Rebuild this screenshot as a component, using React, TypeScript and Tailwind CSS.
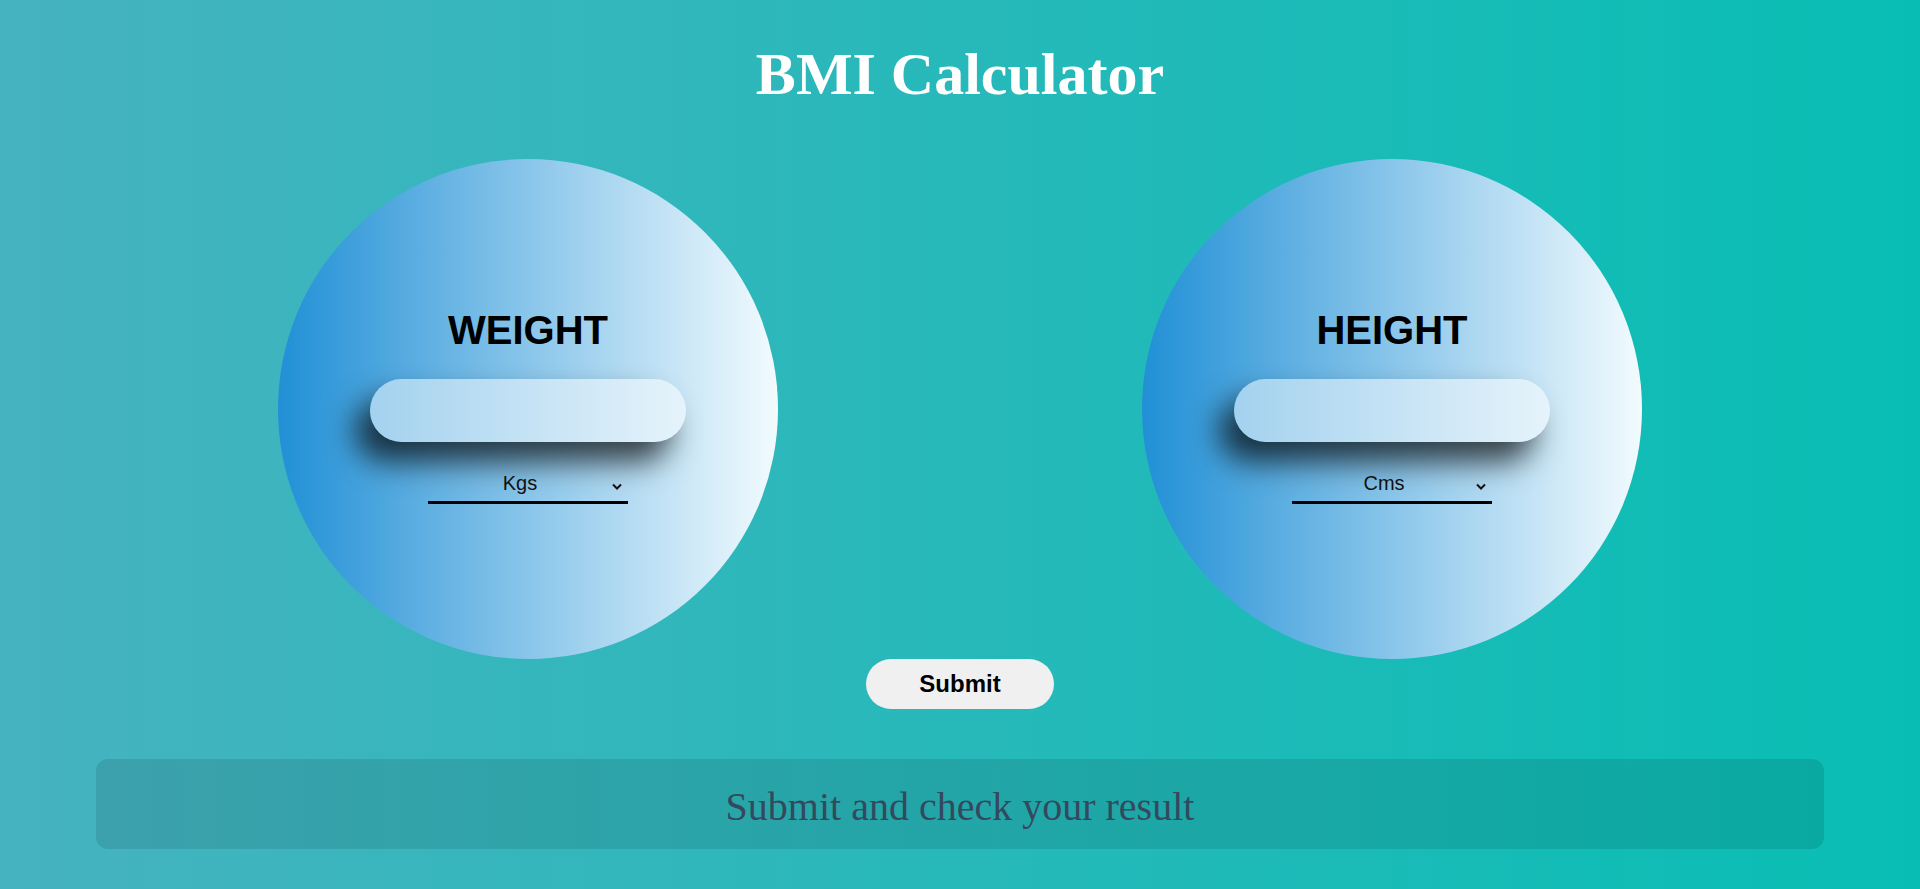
import { useState } from "react"

const Chevron = () => (
    <svg
        className="pointer-events-none absolute right-[6px] top-[14px]"
        width="10"
        height="7"
        viewBox="0 0 10 7"
        fill="none"
    >
        <path d="M1 1.5l4 4 4-4" stroke="#111" strokeWidth="2" />
    </svg>
)

const Field = ({ label, units }: { label: string; units: string[] }) => {
    const [value, setValue] = useState("")
    return (
        <div className="w-[500px] h-[500px] rounded-full bg-[linear-gradient(to_right,#2190d6,#f2fbfe)] flex flex-col items-center pt-[151px]">
            <h2 className="text-[40px] leading-none font-bold text-black font-['Liberation_Sans',Arial,sans-serif]">
                {label}
            </h2>
            <input
                type="text"
                value={value}
                onChange={(e) => setValue(e.target.value)}
                className="mt-[29px] w-[316px] h-[63px] rounded-full bg-white/50 outline-none px-6 text-[20px] shadow-[-15px_20px_30px_rgba(0,0,0,0.7)] font-['Liberation_Sans',Arial,sans-serif]"
            />
            <div className="relative mt-[27px] w-[200px]">
                <select className="appearance-none w-full h-[35px] pb-[4px] bg-transparent border-b-[3px] border-black text-center text-[20px] leading-[23px] pr-4 outline-none text-[#111] font-['Liberation_Sans',Arial,sans-serif]">
                    {units.map((u) => (
                        <option key={u}>{u}</option>
                    ))}
                </select>
                <Chevron />
            </div>
        </div>
    )
}

export default function App() {
    return (
        <div className="min-h-[889px] w-full bg-[linear-gradient(to_right,#46b3c0,#08beb4)] flex flex-col items-center">
            <h1 className="mt-[44px] text-[60px] leading-none font-bold text-white font-['Liberation_Serif','Times_New_Roman',serif]">
                BMI Calculator
            </h1>
            <div className="mt-[55px] w-[1364px] flex justify-between">
                <Field label="WEIGHT" units={["Kgs", "Lbs"]} />
                <Field label="HEIGHT" units={["Cms", "Inches"]} />
            </div>
            <button className="w-[188px] h-[50px] rounded-full bg-[#f0f0f0] text-[24px] font-bold text-black font-['Liberation_Sans',Arial,sans-serif]">
                Submit
            </button>
            <div className="mt-[50px] w-[90%] h-[90px] pt-[5px] rounded-xl bg-black/10 flex items-center justify-center">
                <p className="text-[40px] leading-none text-[#34495e] font-['Liberation_Serif','Times_New_Roman',serif]">
                    Submit and check your result
                </p>
            </div>
        </div>
    )
}
